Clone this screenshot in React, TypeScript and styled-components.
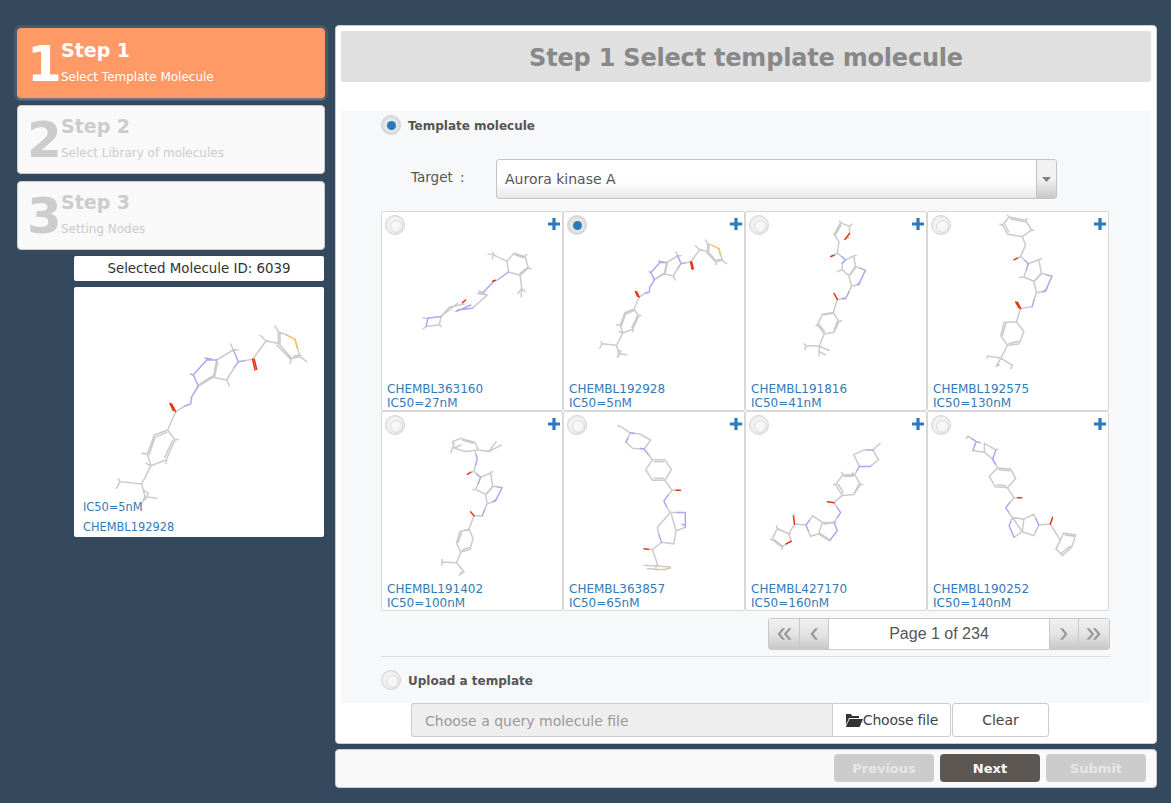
import styled, { createGlobalStyle } from "styled-components";

type Bonds = { g: string; b?: string; r?: string; o?: string };

const big: Bonds = {
  g: "M283 465L323 450L345 480L318 540L273 557L262 522L283 465M290 470L320 457M338 482L314 532M268 522L285 472M323 450L347 395L375 378M415 318L460 292L470 240M420 312L458 288M464 290L473 245M470 240L520 210L512 192M520 210L535 210M500 300L460 292M500 300L508 318M523 262L500 300M553 242L578 238L618 183L600 165M618 183L625 182M618 183L655 190L655 155L645 138M660 190L660 158M655 155L680 165M705 178L720 230L695 235L655 190M700 228L722 226M720 230L740 245M695 235L690 250M650 195L692 238M273 557L245 612L180 605L175 597M180 605L170 625M245 612L255 650L290 655M255 650L248 665M250 630L265 640L255 660M245 520L262 522M273 557L258 550M345 480L355 478M320 540L318 550",
  b: "M375 378L392 372L395 350L415 318M415 318L400 285L392 282M400 285L440 240L470 240M435 234L455 238M520 210L535 245L523 262M535 245L553 242",
  r: "M347 395L335 372M340 392L330 370M578 238L585 270M583 238L590 268",
  o: "M680 165L705 178L712 205",
};

const molecules: Bonds[] = [
  {
    g: "M415 483L436 458L470 468L480 503L455 525L420 515L415 483M440 463L466 472M475 503L455 519M415 483L375 463L358 460M375 463L372 455M375 463L370 475M455 525L460 565L448 580M460 565L470 575M460 565L458 590M345 575L325 580L355 585M330 572L355 585L310 625M265 610L215 650M285 612L240 622L215 650M215 650L210 675L170 680M160 655L175 655M170 680L160 688M210 675L215 680M470 468L476 462M480 503L488 505",
    b: "M420 515L385 540M375 543L345 575M310 625L265 630M260 635L305 615M215 650L175 655L170 680",
    r: "M372 543L380 540M280 608L290 600",
  },
  big,
  {
    g: "M305 218L332 228L332 250M330 262L318 268M300 275L285 253L305 218M290 253L306 225M300 275L295 310L285 316M295 310L308 320M310 340L310 360L330 378M320 330L345 318L350 350L330 378M335 375L352 352M345 318L352 316M310 360L295 366M338 410L330 378M360 405L338 410M295 450L320 448M295 450L283 490L250 495L235 527L255 555L285 550L300 517L283 490M240 527L257 548M285 542L295 517M255 497L280 493M255 555L240 592L200 590L195 585M200 590L197 602M240 592L270 605M240 592L240 622M240 608L258 618M300 517L308 515M235 527L230 530M305 218L302 212M332 228L340 222M350 350L365 356M338 410L330 428",
    b: "M308 320L320 330L310 340M365 356L380 362L360 405M365 398L355 405M330 428L320 448L310 446",
    r: "M318 268L332 250M285 316L275 320M295 450L285 432",
  },
  {
    g: "M810 200L860 210L878 240L850 260L805 252L790 225L810 200M815 206L858 215M798 224L808 245M850 260L860 285L845 320L835 325M845 320L858 332M855 382L885 395M862 362L855 382M868 342L900 330L908 370L885 395M890 392L908 372M900 330L908 326M855 382L842 384M920 425L893 430L885 395M880 472L845 478M845 478L832 518L795 520L785 560L805 590L840 585L855 548L832 518M800 524L790 558M810 584L838 578M805 590L785 628L745 622L742 628M785 628L820 650L815 660M785 628L770 655L780 648M810 200L805 195M860 210L865 205M878 240L885 240M790 225L782 222M908 370L922 375M893 430L886 450",
    b: "M858 332L868 342L862 362M922 375L940 380L920 425M925 418L912 428M886 450L880 472",
    r: "M835 325L825 330M845 478L835 458M840 476L830 458",
  },
  {
    g: "M275 85L318 97L328 120L290 125L255 115L250 95L275 85M280 90L312 100M328 120L360 125L398 105M360 125L382 95M255 100L245 128M255 115L275 105M315 185L305 188M315 185L325 195M328 222L320 240L350 255M335 203L365 190L372 230L350 255M355 252L372 232M365 190L372 185M320 240L312 240M380 275L355 283L350 255M340 320L315 320M315 320L300 360L272 368L262 402L275 430L303 422L312 388L300 360M277 372L267 400M280 424L300 416M275 430L262 462L218 460M218 452L218 470M262 462L285 490L270 500M275 492L285 490M372 230L386 232M355 283L348 300M318 125L322 135M320 165L315 185",
    b: "M322 135L325 148L320 165M325 195L335 203L328 222M386 232L400 235L380 275M385 268L372 278M348 300L340 320",
    r: "M305 188L295 194M315 320L305 308",
  },
  {
    g: "M783 68L770 97L790 115M790 115L825 118M845 90L812 72L783 68M783 68L755 50L745 46M845 90L825 118M838 134L850 150M850 150L888 150L908 180L888 212L850 212L830 180L850 150M855 156L884 156M855 206L884 206M888 212L910 242L922 242M905 310L865 355L870 378M908 316L920 360L922 365M922 365L950 355M878 400L915 405L922 365M878 400L850 422L838 421M850 422L865 465M825 470L905 475M835 480L865 483M865 465L860 480M888 483L905 478M910 242L897 258M893 292L905 310L925 310",
    b: "M825 118L838 134M897 258L885 275L893 292M925 310L950 310L950 355M940 345L950 350M870 378L878 400M783 68L795 70M770 97L775 85M825 118L815 115",
    r: "M922 242L935 242M838 421L825 420",
    o: "M865 483L888 483",
  },
  {
    g: "M425 100L403 120M385 120L375 120L345 135L362 170M395 170L420 150L403 120M355 182L348 195L312 195L290 225L310 258L345 255L365 225L348 195M316 200L344 200M298 224L313 250M345 255L360 225M310 258L285 280M285 340L250 340L238 375L270 395M290 340L255 345M250 340L220 320L210 334M207 365L213 382L238 375M240 372L268 390M165 345L200 348M165 345L148 375L113 358L97 392L127 415L140 405M155 397L148 375M152 375L117 362M104 392L127 410M113 358L110 350M97 392L92 392M127 415L128 422M348 195L340 190M312 195L308 188M365 225L372 225M290 225L284 225M285 280L295 295M295 325L285 340",
    b: "M403 120L385 120M362 170L395 170M362 170L355 182M295 295L305 310L295 325M285 340L295 365L272 395M210 334L200 348L207 365",
    r: "M285 280L265 277M165 345L162 320M140 405L155 397",
  },
  {
    g: "M685 78L697 86M700 122L735 127L760 148M770 120L735 100M735 100L735 127M775 175L815 178L830 207L805 235L768 232L750 200L775 175M780 180L812 183M773 226L800 229M805 235L825 265L836 265M812 280L825 265M808 308L820 325L855 330L850 368L825 385M820 325L850 368M855 330L885 315M885 380L850 368M900 348L885 380M900 348L935 345L960 385L965 395M975 372L1012 378L1000 415L972 440L952 420L965 395L975 372M980 378L1008 382M995 412L970 432M685 78L680 85M770 120L775 118M820 325L815 338M885 315L892 330M760 148L768 162M768 162L775 175",
    b: "M697 86L710 95L722 98M700 122L710 95M768 162L760 148L770 120M812 280L800 295L808 308M815 338L810 350L825 385M892 330L900 348",
    r: "M836 265L848 265M935 345L942 325",
  },
];

const cards = [
  { id: "CHEMBL363160", ic50: "27nM", box: "36 333" },
  { id: "CHEMBL192928", ic50: "5nM", box: "9 13", scale: 1 / 0.675 },
  { id: "CHEMBL191816", ic50: "41nM", box: "18 185" },
  { id: "CHEMBL192575", ic50: "130nM", box: "564 185" },
  { id: "CHEMBL191402", ic50: "100nM", box: "36 5" },
  { id: "CHEMBL363857", ic50: "65nM", box: "582 5" },
  { id: "CHEMBL427170", ic50: "160nM", box: "18 5" },
  { id: "CHEMBL190252", ic50: "140nM", box: "564 5" },
];

const steps = [
  { n: 1, title: "Step 1", sub: "Select Template Molecule" },
  { n: 2, title: "Step 2", sub: "Select Library of molecules" },
  { n: 3, title: "Step 3", sub: "Setting Nodes" },
];

function Molecule({ bonds, viewBox }: { bonds: Bonds; viewBox: string }) {
  return (
    <MoleculeSvg viewBox={viewBox} preserveAspectRatio="xMinYMin meet">
      <path d={bonds.g} stroke="#cbcbcb" />
      {bonds.b && <path d={bonds.b} stroke="#a9a9f7" />}
      {bonds.r && <path d={bonds.r} stroke="#e8330f" />}
      {bonds.o && <path d={bonds.o} stroke="#f7c265" />}
    </MoleculeSvg>
  );
}

function Plus() {
  return (
    <PlusIcon viewBox="0 0 12 12">
      <path d="M4.4 0h3.2v4.4H12v3.2H7.6V12H4.4V7.6H0V4.4h4.4z" fill="#2b7abb" />
    </PlusIcon>
  );
}

function Chevrons({ dir, count }: { dir: "left" | "right"; count: 1 | 2 }) {
  const d =
    count === 2
      ? "M6.5 1L1.5 7l5 6h3l-5-6 5-6zM13 1L8 7l5 6h3l-5-6 5-6z"
      : "M6.5 1L1.5 7l5 6h3l-5-6 5-6z";
  const w = count === 2 ? 16 : 10;
  return (
    <ChevronIcon
      $flip={dir === "right"}
      width={w}
      height={14}
      viewBox={`0 0 ${w + 0.5} 14`}
    >
      <path d={d} fill="#999" />
    </ChevronIcon>
  );
}

export default function App() {
  return (
    <>
      <GlobalStyle />
      <Page>
        <Sidebar>
          {steps.map((s, i) => (
            <StepCard key={s.n} $active={i === 0}>
              <StepNumber>{s.n}</StepNumber>
              <div>
                <StepTitle>{s.title}</StepTitle>
                <StepSub>{s.sub}</StepSub>
              </div>
            </StepCard>
          ))}
          <SelectedId>Selected Molecule ID: 6039</SelectedId>
          <Preview>
            <Molecule bonds={big} viewBox="42 21 750 750" />
            <PreviewLabel>
              <div>IC50=5nM</div>
              <div>CHEMBL192928</div>
            </PreviewLabel>
          </Preview>
        </Sidebar>

        <Main>
          <Panel>
            <PanelHeader>Step 1 Select template molecule</PanelHeader>
            <Section>
              <RadioRow>
                <Radio $checked />
                <RadioLabel>Template molecule</RadioLabel>
              </RadioRow>
              <TargetRow>
                <TargetLabel>Target :</TargetLabel>
                <SelectBox>
                  <SelectValue>Aurora kinase A</SelectValue>
                  <SelectArrow>
                    <svg width="9" height="5" viewBox="0 0 9 5">
                      <path d="M0 0h9L4.5 5z" fill="#808080" />
                    </svg>
                  </SelectArrow>
                </SelectBox>
              </TargetRow>
              <CardGrid>
                {cards.map((c, i) => {
                  const s = c.scale ?? 1;
                  return (
                    <Card key={c.id}>
                      <Molecule
                        bonds={molecules[i]}
                        viewBox={`${c.box} ${546 * s} ${600 * s}`}
                      />
                      <CardTop>
                        <Radio $checked={i === 1} />
                        <Plus />
                      </CardTop>
                      <CardLabel>
                        <div>{c.id}</div>
                        <div>IC50={c.ic50}</div>
                      </CardLabel>
                    </Card>
                  );
                })}
              </CardGrid>
              <PagerRow>
                <Pager>
                  <PagerButton $width={31}>
                    <Chevrons dir="left" count={2} />
                  </PagerButton>
                  <PagerButton $width={29}>
                    <Chevrons dir="left" count={1} />
                  </PagerButton>
                  <PageText>Page 1 of 234</PageText>
                  <PagerButton $width={29}>
                    <Chevrons dir="right" count={1} />
                  </PagerButton>
                  <PagerButton $width={31}>
                    <Chevrons dir="right" count={2} />
                  </PagerButton>
                </Pager>
              </PagerRow>
              <Divider />
              <UploadRow>
                <Radio />
                <RadioLabel>Upload a template</RadioLabel>
              </UploadRow>
            </Section>
            <UploadBar>
              <FileInput>Choose a query molecule file</FileInput>
              <ChooseButton>
                <svg width="18" height="13" viewBox="0 0 18 13">
                  <path
                    d="M1 0h5l1 2h7v2H4L1 11zM4.5 5H18l-3.4 8H0.8z"
                    fill="#333"
                  />
                </svg>
                Choose file
              </ChooseButton>
              <ClearButton>Clear</ClearButton>
            </UploadBar>
          </Panel>
          <Footer>
            <NavButton $primary={false}>Previous</NavButton>
            <NavButton $primary>Next</NavButton>
            <NavButton $primary={false}>Submit</NavButton>
          </Footer>
        </Main>
      </Page>
    </>
  );
}

const GlobalStyle = createGlobalStyle`
  html, body {
    margin: 0;
    height: 100%;
    background: #34495e;
  }
  * {
    box-sizing: border-box;
  }
`;

const Page = styled.div`
  display: flex;
  align-items: flex-start;
  gap: 10px;
  padding: 25px 14px 0 17px;
  font-family: "DejaVu Sans", Verdana, sans-serif;
  color: #555;
`;

const Sidebar = styled.aside`
  width: 308px;
  padding-top: 3px;
  display: flex;
  flex-direction: column;
  align-items: flex-end;
`;

const StepCard = styled.div<{ $active: boolean }>`
  width: 308px;
  height: ${(p) => (p.$active ? "70px" : "69px")};
  margin-bottom: 7px;
  padding: ${(p) => (p.$active ? "9px" : "8px")} 0 0 9px;
  display: flex;
  gap: 3px;
  border-radius: 4px;
  background: ${(p) => (p.$active ? "#ff9966" : "#f9f9f9")};
  border: 1px solid ${(p) => (p.$active ? "#ff9966" : "#ccc")};
  color: ${(p) => (p.$active ? "#fff" : "#ccc")};
  box-shadow: ${(p) =>
    p.$active ? "0 2px 0 #6b7682, 0 0 0 3px rgba(255,255,255,0.1)" : "none"};

  &:nth-child(3) {
    margin-bottom: 6px;
  }
`;

const StepNumber = styled.div`
  width: 31px;
  font-size: 50px;
  font-weight: bold;
  line-height: 46px;
  margin-top: 3px;
`;

const StepTitle = styled.div`
  font-size: 19px;
  font-weight: bold;
  line-height: 24px;
`;

const StepSub = styled.div`
  font-size: 12px;
  line-height: 14px;
  margin-top: 8px;
`;

const SelectedId = styled.div`
  width: 250px;
  height: 25px;
  margin: 0 1px 6px 0;
  background: #fff;
  border-radius: 2px;
  text-align: center;
  font-size: 13.4px;
  line-height: 25px;
  color: #333;
`;

const Preview = styled.div`
  position: relative;
  width: 250px;
  height: 250px;
  margin-right: 1px;
  background: #fff;
  border-radius: 2px;
  overflow: hidden;
`;

const MoleculeSvg = styled.svg`
  display: block;
  width: 100%;
  height: 100%;
  fill: none;

  path {
    stroke-width: 1.5px;
    vector-effect: non-scaling-stroke;
    stroke-linecap: round;
  }
`;

const PreviewLabel = styled.div`
  position: absolute;
  left: 9px;
  bottom: 0;
  font-size: 11.4px;
  line-height: 20px;
  color: #337ab7;
`;

const Main = styled.main`
  width: 822px;
  display: flex;
  flex-direction: column;
  gap: 5px;
`;

const Panel = styled.section`
  height: 719px;
  padding: 5px 5px 0;
  background: #fff;
  border: 1px solid #ccc;
  border-radius: 4px;
`;

const PanelHeader = styled.h1`
  margin: 0 0 29px;
  height: 51px;
  background: #e0e0e0;
  border-radius: 2px;
  text-align: center;
  font-size: 24px;
  line-height: 55px;
  font-weight: bold;
  color: #888;
  letter-spacing: -0.2px;
`;

const Section = styled.div`
  height: 592px;
  padding: 4px 41px 0 40px;
  background: #f7f8fa;
`;

const RadioRow = styled.div`
  display: flex;
  align-items: center;
  gap: 7px;
  height: 20px;
`;

const UploadRow = styled(RadioRow)`
  margin-top: 13px;
`;

const Radio = styled.span<{ $checked?: boolean }>`
  position: relative;
  flex: none;
  display: block;
  width: 20px;
  height: 20px;
  border-radius: 50%;
  border: 1px solid #d4d4d4;
  background: ${(p) =>
    p.$checked
      ? "radial-gradient(circle, #f4f4f4 0, #e8e8e8 45%, #c4c4c4 100%)"
      : "radial-gradient(circle, #fafafa 0, #f4f4f4 45%, #e0e0e0 100%)"};

  &::after {
    content: "";
    position: absolute;
    left: ${(p) => (p.$checked ? "4.5px" : "3.5px")};
    top: ${(p) => (p.$checked ? "4.5px" : "3.5px")};
    width: ${(p) => (p.$checked ? "9px" : "11px")};
    height: ${(p) => (p.$checked ? "9px" : "11px")};
    border-radius: 50%;
    background: ${(p) => (p.$checked ? "#2b7abb" : "transparent")};
    border: ${(p) => (p.$checked ? "none" : "1px solid #dadada")};
  }
`;

const RadioLabel = styled.span`
  margin-top: 2px;
  font-size: 12px;
  font-weight: bold;
  color: #555;
`;

const TargetRow = styled.div`
  display: flex;
  align-items: center;
  margin: 24px 53px 12px 30px;
  height: 40px;
`;

const TargetLabel = styled.div`
  width: 85px;
  font-size: 13.5px;
  word-spacing: 3px;
  margin-top: -4px;
`;

const SelectBox = styled.div`
  flex: 1;
  height: 40px;
  display: flex;
  border: 1px solid #c4c4c4;
  border-radius: 3px;
  overflow: hidden;
  background: linear-gradient(#fff 0, #fff 58%, #e8e8e8 100%);
`;

const SelectValue = styled.div`
  flex: 1;
  padding-left: 8px;
  font-size: 14px;
  line-height: 38px;
`;

const SelectArrow = styled.div`
  width: 20px;
  display: flex;
  align-items: center;
  justify-content: center;
  border-left: 1px solid #c4c4c4;
  background: linear-gradient(#f2f2f2 0, #f2f2f2 50%, #c8c8c8 100%);
`;

const CardGrid = styled.div`
  display: grid;
  grid-template-columns: repeat(4, 182px);
  grid-auto-rows: 200px;
`;

const Card = styled.article`
  position: relative;
  width: 182px;
  height: 200px;
  background: #fff;
  border: 1px solid #d8d8d8;
  border-radius: 2px;
  overflow: hidden;
`;

const CardTop = styled.div`
  position: absolute;
  top: 3px;
  left: 3px;
  right: 2px;
  display: flex;
  justify-content: space-between;
`;

const PlusIcon = styled.svg`
  width: 12px;
  height: 12px;
  margin-top: 3px;
`;

const CardLabel = styled.div`
  position: absolute;
  left: 5px;
  bottom: 0;
  font-size: 12px;
  line-height: 14px;
  color: #337ab7;
`;

const PagerRow = styled.div`
  display: flex;
  justify-content: flex-end;
  margin-top: 7px;
`;

const Pager = styled.div`
  width: 342px;
  height: 32px;
  display: flex;
  border: 1px solid #c8c8c8;
  border-radius: 3px;
  overflow: hidden;
  background: #fff;
`;

const PagerButton = styled.div<{ $width: number }>`
  flex: none;
  width: ${(p) => p.$width}px;
  display: flex;
  align-items: center;
  justify-content: center;
  background: linear-gradient(#f0f0f0 0, #e4e4e4 50%, #c8c8c8 100%);
  border-right: 1px solid #c8c8c8;

  &:nth-child(n + 4) {
    border-right: none;
    border-left: 1px solid #c8c8c8;
  }
`;

const ChevronIcon = styled.svg<{ $flip: boolean }>`
  transform: ${(p) => (p.$flip ? "scaleX(-1)" : "none")};
`;

const PageText = styled.div`
  flex: 1;
  text-align: center;
  font-family: "Liberation Sans", Arial, sans-serif;
  font-size: 16px;
  line-height: 30px;
  color: #555;
`;

const Divider = styled.hr`
  margin: 6px 0 0;
  border: none;
  border-top: 1px solid #dcdee2;
`;

const UploadBar = styled.div`
  display: flex;
  height: 34px;
  margin-left: 70px;
  gap: 1px;
`;

const FileInput = styled.div`
  width: 421px;
  padding-left: 13px;
  background: #eee;
  border: 1px solid #ccc;
  border-right: none;
  border-radius: 3px 0 0 3px;
  font-size: 14px;
  line-height: 34px;
  color: #999;
`;

const ChooseButton = styled.div`
  width: 119px;
  margin-left: -1px;
  display: flex;
  align-items: center;
  justify-content: center;
  background: #fff;
  border: 1px solid #ccc;
  border-radius: 0 3px 3px 0;
  font-size: 14px;
  color: #444;
  letter-spacing: -0.2px;
`;

const ClearButton = styled.div`
  width: 97px;
  background: #fff;
  border: 1px solid #ccc;
  border-radius: 3px;
  text-align: center;
  font-size: 14px;
  line-height: 32px;
  color: #444;
`;

const Footer = styled.footer`
  height: 39px;
  display: flex;
  justify-content: flex-end;
  align-items: center;
  gap: 6px;
  padding: 0 10px 1px 0;
  background: #f9f9f9;
  border: 1px solid #ccc;
  border-radius: 4px;
`;

const NavButton = styled.button<{ $primary: boolean }>`
  width: 100px;
  height: 28px;
  padding: 0;
  border: none;
  border-radius: 4px;
  font-family: inherit;
  font-size: 13px;
  font-weight: bold;
  color: ${(p) => (p.$primary ? "#fff" : "#e6e6e6")};
  background: ${(p) => (p.$primary ? "#5d5753" : "#cccccc")};
`;
